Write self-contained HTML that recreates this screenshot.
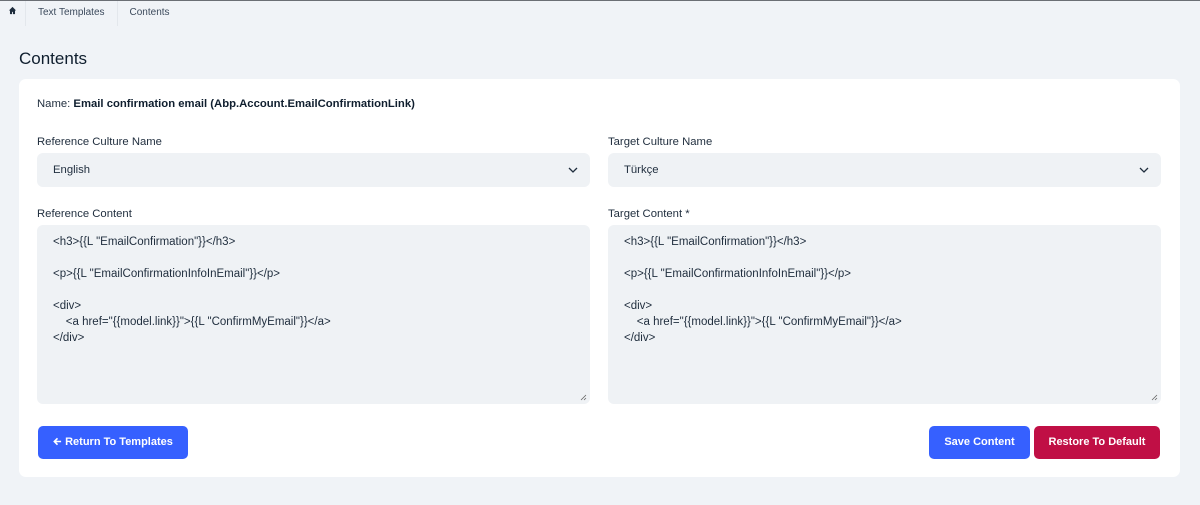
<!DOCTYPE html><html><head><style>
*{box-sizing:border-box;margin:0;padding:0}
body{width:1200px;height:505px;background:#f0f3f7;font-family:"Liberation Sans",sans-serif;color:#1f2d3d;position:relative;overflow:hidden}
.top{position:absolute;left:0;top:0;width:1200px;height:1px;background:#6b6f75}
.bc{position:absolute;top:1px;left:0;height:25px;display:flex;font-size:10px;color:#3c4a5c}
.bc div{padding:0 12px;line-height:24px;border-right:1px solid #e3e7ec}
h1{position:absolute;left:19px;top:49px;font-size:17px;font-weight:normal;color:#0f1e2e}
.card{position:absolute;left:19px;top:79px;width:1161px;height:398px;background:#fff;border-radius:7px}
.abs{position:absolute}
.lbl{font-size:11.3px;color:#1f2d3d}
.sel{height:34px;width:553px;background:#eff2f5;border-radius:6px;font-size:11.3px;padding-left:16px;line-height:35px}
.sel svg{position:absolute;right:12px;top:14px}
.ta{width:553px;height:179px;background:#eff2f5;border-radius:6px;font-size:11.5px;line-height:16px;padding:9px 16px;white-space:pre;color:#1f2d3d}
.ta svg{position:absolute;right:3px;bottom:3px}
.btn{height:33px;border-radius:5px;color:#fff;font-weight:bold;font-size:11px;text-align:center;line-height:33px}
</style></head><body>
<div class="top"></div>
<div class="bc"><div style="padding:0 8px"><svg width="9" height="9" viewBox="0 0 10 10"><path d="M5 1L1 5h1.2v4h2.3V6.5h1V9h2.3V5H9z" fill="#1f2d3d"/></svg></div><div>Text Templates</div><div style="border:none">Contents</div></div>
<h1>Contents</h1>
<div class="card">
<div class="abs lbl" style="left:18px;top:19px">Name: <b style="color:#0f1e2e">Email confirmation email (Abp.Account.EmailConfirmationLink)</b></div>
<div class="abs lbl" style="left:18px;top:57px">Reference Culture Name</div>
<div class="abs lbl" style="left:589px;top:57px">Target Culture Name</div>
<div class="abs sel" style="left:18px;top:74px">English<svg width="10" height="7" viewBox="0 0 10 7"><path d="M1 1l4 4 4-4" stroke="#1f2d3d" fill="none" stroke-width="1.3"/></svg></div>
<div class="abs sel" style="left:589px;top:74px">Türkçe<svg width="10" height="7" viewBox="0 0 10 7"><path d="M1 1l4 4 4-4" stroke="#1f2d3d" fill="none" stroke-width="1.3"/></svg></div>
<div class="abs lbl" style="left:18px;top:129px">Reference Content</div>
<div class="abs lbl" style="left:589px;top:129px">Target Content *</div>
<div class="abs ta" style="left:18px;top:146px">&lt;h3&gt;{{L "EmailConfirmation"}}&lt;/h3&gt;

&lt;p&gt;{{L "EmailConfirmationInfoInEmail"}}&lt;/p&gt;

&lt;div&gt;
    &lt;a href="{{model.link}}"&gt;{{L "ConfirmMyEmail"}}&lt;/a&gt;
&lt;/div&gt;<svg width="7" height="7" viewBox="0 0 7 7"><path d="M1 6L6 1M4 6L6 4" stroke="#666" stroke-width="0.8"/></svg></div>
<div class="abs ta" style="left:589px;top:146px">&lt;h3&gt;{{L "EmailConfirmation"}}&lt;/h3&gt;

&lt;p&gt;{{L "EmailConfirmationInfoInEmail"}}&lt;/p&gt;

&lt;div&gt;
    &lt;a href="{{model.link}}"&gt;{{L "ConfirmMyEmail"}}&lt;/a&gt;
&lt;/div&gt;<svg width="7" height="7" viewBox="0 0 7 7"><path d="M1 6L6 1M4 6L6 4" stroke="#666" stroke-width="0.8"/></svg></div>
<div class="abs btn" style="left:19px;top:347px;width:150px;background:#3660ff"><svg width="9" height="9" viewBox="0 0 10 10" style="vertical-align:-1px;margin-right:3px"><path d="M9 5H2M5 1.5L1.5 5 5 8.5" stroke="#fff" stroke-width="1.8" fill="none"/></svg>Return To Templates</div>
<div class="abs btn" style="left:910px;top:347px;width:101px;background:#3660ff">Save Content</div>
<div class="abs btn" style="left:1015px;top:347px;width:126px;background:#c00f45">Restore To Default</div>
</div>
</body></html>
